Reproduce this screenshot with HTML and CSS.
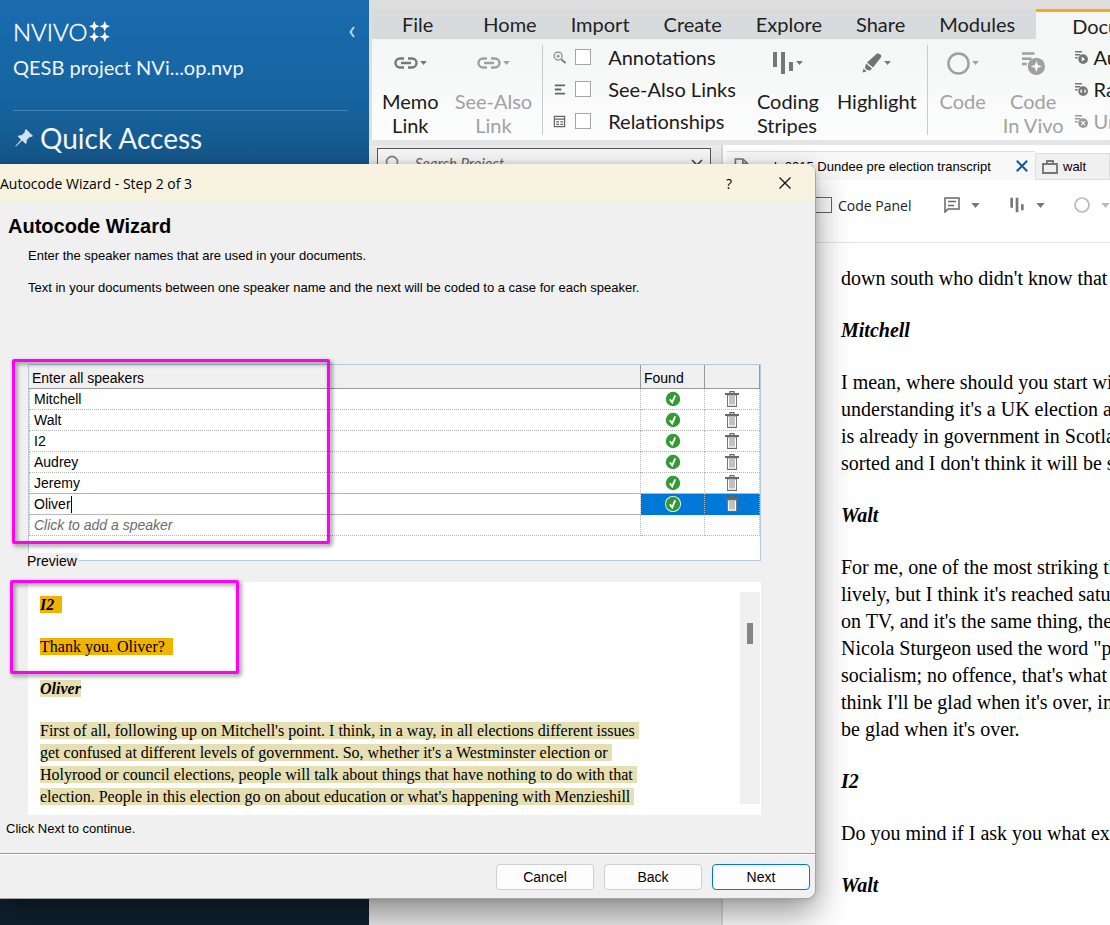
FILE: index.html
```html
<!DOCTYPE html>
<html lang="en">
<head>
<meta charset="utf-8">
<title>NVivo - Autocode Wizard</title>
<link rel="stylesheet" href="styles.css">
</head>
<body>
<svg class="defs" aria-hidden="true">
  <symbol id="link" viewBox="0 0 24 12"><path d="M10 1.500H6a4.500 4.500 0 0 0 0 9h4M14 1.500h4a4.500 4.500 0 0 1 0 9h-4M7 6h10" fill="none" stroke="currentColor" stroke-width="2.400"/></symbol>
  <symbol id="caret" viewBox="0 0 10 6"><path d="M0 0h10L5 6z" fill="currentColor"/></symbol>
  <symbol id="stripes" viewBox="0 0 22 24"><path d="M1 1h4v15H1zM9 1h4v22H9zM17 11h4v9h-4z" fill="currentColor"/></symbol>
  <symbol id="ring" viewBox="0 0 24 24"><circle cx="12" cy="12" r="10.500" fill="none" stroke="currentColor" stroke-width="2.600"/></symbol>
  <symbol id="tick" viewBox="0 0 16 16"><circle cx="8" cy="8" r="7.200" fill="#339933"/><path d="M4.800 8.200l2.400 3.200 3-7" fill="none" stroke="#fff" stroke-width="1.900"/></symbol>
  <symbol id="bin" viewBox="0 0 14 16"><path d="M0 2h14v2H0z" fill="#666"/><path d="M5 2V.7h4V2" fill="none" stroke="#666" stroke-width="1.200"/><path d="M2.500 4h9v11.400h-9z" fill="#fff" stroke="#777"/><path d="M5 5v8.500M7 5v8.500M9 5v8.500" stroke="#777" stroke-width=".9"/><path d="M2 15.400h10" stroke="#666"/></symbol>
  <symbol id="code" viewBox="0 0 24 24"><path d="M0 1.500h13M0 7h10M0 12.500h5" stroke="currentColor" stroke-width="2.600"/><circle cx="15" cy="15" r="9" fill="currentColor"/></symbol>
</svg>

<div class="app">
  <aside class="sidebar">
    <div class="brand">
      <span class="logo">NVIVO<svg class="stars" viewBox="0 0 22 22"><g fill="#fff"><path id="s" d="M5.500 0l1.600 3.900L11 5.500 7.100 7.100 5.500 11 3.900 7.100 0 5.500l3.900-1.600z"/><use href="#s" x="11"/><use href="#s" y="11"/><use href="#s" x="11" y="11"/></g></svg></span>
      <button class="collapse" aria-label="Collapse panel"><svg viewBox="0 0 6 12"><path d="M5 1L1.500 6 5 11" fill="none" stroke="#b9d2e8" stroke-width="2"/></svg></button>
    </div>
    <div class="project">QESB project NVi...op.nvp</div>
    <h2 class="quick"><svg viewBox="0 0 18 18"><path d="M11 0l7 7-2 1-1-.3-3.300 3.300c.4 1.800 0 3-1 4l-3.500-3.600L1.500 17 0 18l1-1.700 5-5.600L2.700 7.300c1-1 2.300-1.400 4-1L10 3l-.3-1.200z" fill="#d5e2ee"/></svg>Quick Access</h2>
    <a class="side-link" href="#">Maps</a>
  </aside>

  <main class="main">
    <nav class="tabs">
      <button class="tab file">File</button><button class="tab">Home</button><button class="tab">Import</button><button class="tab">Create</button><button class="tab">Explore</button><button class="tab">Share</button><button class="tab">Modules</button><button class="tab active">Document</button>
    </nav>
    <div class="ribbon">
      <div class="group links">
        <button class="tool"><span class="glyph"><svg class="i-link"><use href="#link"/></svg><svg class="i-caret"><use href="#caret"/></svg></span>Memo<br>Link</button>
        <button class="tool off"><span class="glyph"><svg class="i-link"><use href="#link"/></svg><svg class="i-caret"><use href="#caret"/></svg></span>See-Also<br>Link</button>
      </div>
      <div class="group view">
        <div class="checks">
          <label><svg viewBox="0 0 14 14"><circle cx="5.500" cy="5.500" r="4.300" fill="none" stroke="#888" stroke-width="1.300"/><path d="M9 9l4.500 4" stroke="#777" stroke-width="2"/><path d="M3.500 5.500h4M5.500 3.500v4" stroke="#888"/></svg><input type="checkbox">Annotations</label>
          <label><svg viewBox="0 0 14 14"><path d="M2 2.500h11M2 7h7M2 11.500h11" stroke="#666" stroke-width="2"/></svg><input type="checkbox">See-Also Links</label>
          <label><svg viewBox="0 0 14 14"><path d="M1.500 1.500h11v11h-11zM1.500 4.500h11M3.500 7.500h3M8 7.500h3M3.500 10h3M8 10h3" fill="none" stroke="#666" stroke-width="1.300"/></svg><input type="checkbox">Relationships</label>
        </div>
        <button class="tool left"><span class="glyph"><svg class="i-stripes"><use href="#stripes"/></svg><svg class="i-caret"><use href="#caret"/></svg></span>Coding<br>Stripes</button>
        <button class="tool"><span class="glyph"><svg class="i-mark" viewBox="0 0 20 20"><path d="M15 0.500q2.500-.5 4 1.500.8 1.500-.5 3L11 14.500 5 9.500z" fill="#737373"/><path d="M4 10.500l6 5-2 2-3-.5-2-2z" fill="#737373"/><path d="M1.500 15.500l3 3-4 1z" fill="#737373"/></svg><svg class="i-caret"><use href="#caret"/></svg></span>Highlight</button>
      </div>
      <div class="group coding">
        <button class="tool off"><span class="glyph"><svg class="i-ring"><use href="#ring"/></svg><svg class="i-caret"><use href="#caret"/></svg></span>Code</button>
        <button class="tool off"><span class="glyph"><svg class="i-ring" viewBox="0 0 24 24"><use href="#code"/><path d="M15 9l1.500 4.500L21 15l-4.500 1.500L15 21l-1.500-4.500L9 15l4.500-1.500z" fill="#fafafa"/></svg></span>Code<br>In Vivo</button>
        <div class="stack">
          <button><svg viewBox="0 0 24 24"><use href="#code"/><path d="M12.500 10.500l6 4.500-6 4.500z" fill="#fff"/></svg>Auto Code</button>
          <button><svg viewBox="0 0 24 24"><use href="#code"/><path d="M12.500 10.500v9L9 15zM17.500 10.500v9L21 15z" fill="#fff"/></svg>Range Code</button>
          <button class="off"><svg viewBox="0 0 24 24"><use href="#code"/><path d="M11.500 11.500l7 7M18.500 11.500l-7 7" stroke="#fff" stroke-width="2"/></svg>Uncode</button>
        </div>
      </div>
    </div>

    <div class="work">
      <section class="list">
        <div class="search"><svg viewBox="0 0 16 16"><circle cx="7" cy="7" r="5.500" fill="none" stroke="#888" stroke-width="1.800"/></svg><input type="search" placeholder="Search Project" aria-label="Search project"><svg class="chev" viewBox="0 0 12 8"><path d="M1 1l5 5 5-5" fill="none" stroke="#444" stroke-width="1.600"/></svg></div>
      </section>
      <section class="doc">
        <div class="doctabs">
          <div class="doctab current"><svg class="page" viewBox="0 0 16 18"><path d="M1.500 1.500h8l5 5v10h-13zM9.500 1.500v5h5" fill="none" stroke="#777" stroke-width="1.800"/></svg><span>qesb 2015 Dundee pre election transcript</span><button class="x" aria-label="Close tab"><svg viewBox="0 0 12 12"><path d="M.8.8l10.400 10.400M11.200.8L.8 11.200" stroke="#12599c" stroke-width="2"/></svg></button></div>
          <div class="doctab"><svg class="case" viewBox="0 0 16 14"><path d="M1 4h14v9H1zM5 4V1h6v3" fill="none" stroke="#777" stroke-width="1.900"/></svg>walt</div>
        </div>
        <div class="doctools">
          <label><input type="checkbox">Code Panel</label>
          <button aria-label="Annotations"><svg class="i-note" viewBox="0 0 16 16"><path d="M1 1h14v11H4l-3 3zM4 4.500h8M4 8.500h6" fill="none" stroke="#666" stroke-width="1.500"/></svg><svg class="i-caret"><use href="#caret"/></svg></button>
          <button aria-label="Coding stripes"><svg class="i-note"><use href="#stripes"/></svg><svg class="i-caret"><use href="#caret"/></svg></button>
          <button class="off" aria-label="Code"><svg class="i-note"><use href="#ring"/></svg><svg class="i-caret"><use href="#caret"/></svg></button>
        </div>
        <article class="transcript">
          <p>down south who didn't know that</p>
          <h3>Mitchell</h3>
          <p>I mean, where should you start with<br>understanding it's a UK election and<br>is already in government in Scotland<br>sorted and I don't think it will be so</p>
          <h3>Walt</h3>
          <p>For me, one of the most striking things<br>lively, but I think it's reached saturation<br>on TV, and it's the same thing, the<br>Nicola Sturgeon used the word "progressive<br>socialism; no offence, that's what<br>think I'll be glad when it's over, in<br>be glad when it's over.</p>
          <h3>I2</h3>
          <p>Do you mind if I ask you what exactly</p>
          <h3>Walt</h3>
        </article>
      </section>
    </div>
  </main>
</div>

<div class="dialog" role="dialog" aria-labelledby="dlg-title">
  <header class="titlebar">
    <span id="dlg-title">Autocode Wizard - Step 2 of 3</span>
    <button class="help" aria-label="Help">?</button>
    <button class="close" aria-label="Close"><svg viewBox="0 0 12 12"><path d="M.5.5l11 11M11.500.5l-11 11" stroke="#111" stroke-width="1.300"/></svg></button>
  </header>
  <div class="content">
    <h1>Autocode Wizard</h1>
    <p class="intro">Enter the speaker names that are used in your documents.</p>
    <p class="intro">Text in your documents between one speaker name and the next will be coded to a case for each speaker.</p>
    <div class="grid">
      <table>
        <colgroup><col><col class="c-found"><col class="c-bin"></colgroup>
        <thead><tr><th>Enter all speakers</th><th>Found</th><th></th></tr></thead>
        <tbody>
          <tr><td>Mitchell</td><td><svg class="tick"><use href="#tick"/></svg></td><td><button aria-label="Delete Mitchell"><svg class="bin"><use href="#bin"/></svg></button></td></tr>
          <tr><td>Walt</td><td><svg class="tick"><use href="#tick"/></svg></td><td><button aria-label="Delete Walt"><svg class="bin"><use href="#bin"/></svg></button></td></tr>
          <tr><td>I2</td><td><svg class="tick"><use href="#tick"/></svg></td><td><button aria-label="Delete I2"><svg class="bin"><use href="#bin"/></svg></button></td></tr>
          <tr><td>Audrey</td><td><svg class="tick"><use href="#tick"/></svg></td><td><button aria-label="Delete Audrey"><svg class="bin"><use href="#bin"/></svg></button></td></tr>
          <tr class="before"><td>Jeremy</td><td><svg class="tick"><use href="#tick"/></svg></td><td><button aria-label="Delete Jeremy"><svg class="bin"><use href="#bin"/></svg></button></td></tr>
          <tr class="selected"><td><div class="edit"><input class="name" value="Oliver" aria-label="Speaker name"><span class="cursor"></span></div></td><td><svg class="tick"><use href="#tick"/></svg></td><td><button aria-label="Delete Oliver"><svg class="bin"><use href="#bin"/></svg></button></td></tr>
          <tr><td><input class="new" placeholder="Click to add a speaker" aria-label="New speaker"></td><td></td><td></td></tr>
        </tbody>
      </table>
    </div>
    <h2 class="preview-title">Preview</h2>
    <div class="preview">
      <div class="preview-text">
        <p class="hot"><mark><b>I2</b>&nbsp; </mark></p>
        <p class="hot"><mark>Thank you. Oliver?&nbsp; </mark></p>
        <p><mark class="tight"><b>Oliver</b></mark></p>
        <p><mark>First of all, following up on Mitchell's point. I think, in a way, in all elections different issues<br>get confused at different levels of government. So, whether it's a Westminster election or<br>Holyrood or council elections, people will talk about things that have nothing to do with that<br>election. People in this election go on about education or what's happening with Menzieshill</mark></p>
      </div>
      <div class="track"><div class="thumb"></div></div>
    </div>
    <p class="hint">Click Next to continue.</p>
  </div>
  <footer class="actions">
    <button>Cancel</button><button>Back</button><button class="primary">Next</button>
  </footer>
  <div class="callout speakers"></div>
  <div class="callout passage"></div>
</div>
</body>
</html>
```
FILE: styles.css
```css
* { box-sizing: border-box; }
body { margin: 0; overflow: hidden; font-family: "Liberation Sans", Arial, sans-serif; font-size: 13px; color: #000; }
button { border: 0; background: none; padding: 0; font: inherit; color: inherit; }
h1, h2, h3, p { margin: 0; }
input { margin: 0; }
svg { display: block; flex: none; }
.defs { position: absolute; width: 0; height: 0; }

.app { display: grid; grid-template-columns: 369px minmax(0, 1fr); height: 100vh; font-family: Lato, sans-serif; font-size: 20px; }

.sidebar { display: flex; flex-direction: column; padding: 18px 14px 0 13px; color: #f2f6fa; background: linear-gradient(#196cb0 0, #17639f 100px, #145789 165px, #10222f 860px); }
.brand { display: flex; justify-content: space-between; align-items: center; height: 27px; }
.logo { display: flex; align-items: center; gap: 2px; font-size: 24px; line-height: 24px; font-weight: 300; color: #fff; -webkit-text-stroke: 0.4px #fff; }
.stars { width: 21px; height: 21px; }
.collapse svg { width: 6px; height: 12px; }
.project { height: 66px; line-height: 24px; padding-top: 10px; border-bottom: 1px solid #4283b9; margin-right: 7px; }
.quick { display: flex; align-items: center; gap: 7px; height: 54px; padding-left: 2px; font-size: 28px; font-weight: 400; }
.quick svg { width: 18px; height: 18px; }
.side-link { margin-top: auto; padding: 0 0 26px 60px; line-height: 24px; color: #d5e2ee; text-decoration: none; }

.main { display: flex; flex-direction: column; min-width: 0; overflow: hidden; background: #dedede; padding-top: 9px; }
.tabs { display: flex; height: 30px; background: #d8dbde; margin-left: 3px; flex: none; color: #222; }
.tab { padding: 0 17px; flex: none; }
.tab.file { padding: 0 33px 0 30px; }
.tab.active { padding: 0 36px; border-top: 3px solid #ffa811; background: #f5f6f6; margin-left: 4px; }

.ribbon { display: flex; flex: none; height: 101px; margin-left: 3px; background: linear-gradient(#f4f5f5, #fdfdfd); overflow: hidden; color: #1b1b1b; }
.group { display: flex; flex: none; align-items: flex-start; margin: 6px 0 5px; height: 90px; border-right: 1px solid #c9cbcc; }
.links { padding: 0 10px; gap: 16px; }
.tool { display: block; line-height: 24px; padding-top: 6px; text-align: center; }
.tool.left { text-align: left; margin-right: -3px; }
.off { color: #a0a2a3; }
.glyph { display: flex; justify-content: center; align-items: center; gap: 2px; height: 24px; margin-bottom: 14px; color: #777; }
.off .glyph { color: #a0a0a0; }
.i-link { width: 24px; height: 12px; }
.i-caret { width: 7px; height: 4px; }
.i-stripes { width: 22px; height: 24px; }
.i-mark { width: 20px; height: 20px; }
.i-ring { width: 23px; height: 23px; }
.view { padding: 0 10px; gap: 21px; }
.checks label { display: flex; align-items: center; height: 32px; }
.checks { margin-top: -4px; }
.checks svg { width: 13px; height: 13px; margin-right: 9px; }
.checks input, .doctools input { appearance: none; width: 16px; height: 16px; margin-right: 17px; border: 1px solid #a3a6a8; background: #fff; }
.coding { padding-left: 12px; gap: 17px; border: 0; }
.stack { display: flex; flex-direction: column; margin: -4px 0 0 -6px; }
.stack button { display: flex; align-items: center; gap: 6px; height: 32px; white-space: nowrap; }
.stack svg { width: 13px; height: 13px; color: #777; }
.stack .off svg { color: #999; }

.work { display: grid; grid-template-columns: 354px minmax(0, 1fr); flex: 1; min-height: 0; border-top: 5px solid #e4e5e7; }
.list { padding: 3px 10px 0 8px; background: #ececec; border-right: 2px solid #d9d9d9; }
.search { display: flex; align-items: center; gap: 14px; height: 30px; padding: 0 7px; border: 1px solid #555; background: #f8f8f8; }
.search svg { width: 16px; height: 16px; }
.search .chev { width: 12px; height: 8px; }
.search input { flex: 1; min-width: 0; border: 0; outline: 0; background: none; padding: 0; font: italic 15px Lato, sans-serif; }
.search input::placeholder { color: #666; }
.doc { display: flex; flex-direction: column; min-width: 0; background: #fff; }
.doctabs { display: flex; height: 35px; padding: 6px 0 0 4px; overflow: hidden; flex: none; }
.doctab { display: flex; align-items: center; height: 27px; margin-top: 2px; padding: 0 6px; gap: 5px; flex: 1 0 auto; background: #f0f0f0; border: 1px solid #dedede; font: 13px "Liberation Sans", Arial, sans-serif; }
.doctab.current { width: 308px; flex: none; gap: 4px; height: 29px; margin-top: 0; background: #f8f8f8; border-width: 1px 0 0; padding: 0 7px; }
.doctab.current span { flex: 1; white-space: nowrap; }
.page { width: 15px; height: 18px; }
.case { width: 16px; height: 14px; }
.x svg { width: 12px; height: 12px; }
.doctools { display: flex; align-items: center; height: 63px; padding: 0 0 12px 92px; border-bottom: 1px solid #e4e4e4; flex: none; overflow: hidden; font: 14px "Open Sans", sans-serif; color: #222; }
.doctools label { display: flex; align-items: center; width: 129px; flex: none; }
.doctools input { width: 17px; margin-right: 6px; border-color: #566a70; }
.doctools button { display: flex; align-items: center; gap: 11px; width: 65px; flex: none; color: #777; }
.doctools .off { color: #bbb; }
.i-note { width: 16px; height: 16px; }
.doctools .i-caret { width: 9px; height: 5px; }
.transcript { padding: 22px 0 0 118px; overflow: hidden; white-space: nowrap; font-family: "Liberation Serif", "Times New Roman", serif; font-size: 20px; line-height: 27px; }
.transcript > * { margin-bottom: 25px; }
.transcript h3 { font-size: 20px; font-style: italic; }

.dialog { position: absolute; left: 0; top: 164px; width: 816px; max-width: 100vw; background: #f0f0f0; border: solid #a6a6a6; border-width: 0 1px 1px 0; border-radius: 0 9px 9px 0; box-shadow: 0 14px 34px rgba(0, 0, 0, .42), 0 0 6px rgba(0, 0, 0, .14); }
.titlebar { display: flex; align-items: center; height: 38px; padding-right: 24px; background: #f7f3e0; border-radius: 0 8px 0 0; font: 14px "Open Sans", sans-serif; }
.titlebar span { flex: 1; }
.help { margin-right: 47px; }
.close svg { width: 12px; height: 12px; }
.content { height: 651px; }
.content h1 { padding: 11px 8px 0; font-size: 20px; line-height: 27px; }
.intro { padding: 8px 0 8px 28px; line-height: 16px; }
.intro + .intro { padding-bottom: 0; }
.grid { height: 197px; margin: 68px 54px 0 28px; border: 1px solid #b8cad9; background: #fff; font-size: 14px; }
table { width: 100%; table-layout: fixed; border-collapse: separate; border-spacing: 0; }
.c-found { width: 64px; }
.c-bin { width: 55px; }
th { height: 24px; padding: 2px 3px 0; line-height: 18px; text-align: left; font-weight: 400; background: #f0f0f0; border: solid #999; border-width: 0 1px 1px 0; }
td { height: 21px; padding: 0 5px; line-height: 18px; border: dotted #b5b5b5; border-width: 0 1px 1px 0; }
tr td:first-child { border-left-width: 1px; padding-left: 4px; }
.before td, .selected td { border-bottom-style: solid; }
.selected td:not(:first-child) { background: #0078d7; border-bottom-color: #0078d7; }
.tick { width: 16px; height: 16px; margin: 1px auto; }
.selected .tick { border-radius: 50%; background: #fff; }
td button { display: block; margin: 1px auto; }
.bin { width: 14px; height: 16px; }
td input { display: block; height: 18px; border: 0; outline: 0; padding: 0; background: none; font: inherit; }
.edit { display: flex; align-items: center; }
.name { width: 37px; }
.cursor { width: 1px; height: 17px; background: #000; }
.new { width: 100%; }
.new::placeholder { color: #6b6b6b; font-style: italic; }
.preview-title { position: relative; width: 52px; margin: -8px 0 13px 27px; background: #f0f0f0; font-size: 14px; font-weight: 400; line-height: 16px; }
.preview { display: flex; justify-content: space-between; height: 233px; margin: 0 54px 0 28px; padding: 10px 1px 11px 12px; background: #fff; }
.preview-text { padding-top: 2px; white-space: nowrap; font-family: "Liberation Serif", "Times New Roman", serif; font-size: 16px; line-height: 22px; }
.preview-text p { margin-bottom: 20px; }
.preview-text b { font-style: italic; }
mark { background: #e5dfb3; color: inherit; padding-right: 4px; box-decoration-break: clone; -webkit-box-decoration-break: clone; }
.tight { padding-right: 0; }
.hot mark { background: #f2b200; }
.track { flex: none; width: 20px; padding: 31px 7px 0; background: #f0f0f0; }
.thumb { height: 21px; background: #858585; }
.hint { padding: 6px 6px 0; line-height: 16px; }
.actions { display: flex; justify-content: flex-end; gap: 10px; padding: 10px 5px 8px; border-top: 1px solid #999; box-shadow: inset 0 1px #fff; }
.actions button { width: 98px; height: 26px; border: 1px solid #cfcfcf; border-radius: 4px; background: #fdfdfd; font-size: 14px; }
.actions .primary { border-color: #0078d7; }
.callout { position: absolute; border: 3px solid #ff00f5; border-radius: 2px; filter: drop-shadow(2px 2px 2px rgba(0, 0, 0, .5)); pointer-events: none; }
.speakers { left: 12px; top: 195px; width: 318px; height: 185px; }
.passage { left: 10px; top: 416px; width: 229px; height: 94px; }
```
